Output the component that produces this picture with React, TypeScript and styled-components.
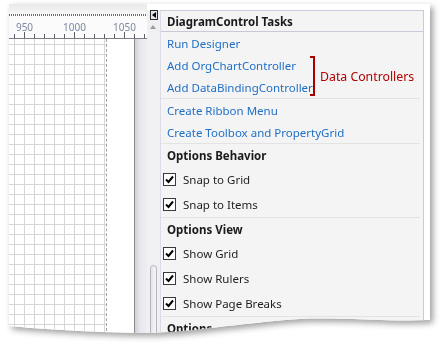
import React from 'react';
import styled, { createGlobalStyle } from 'styled-components';

const GlobalStyle = createGlobalStyle`
  html, body {
    margin: 0;
    padding: 0;
    background: #ffffff;
    width: 443px;
    height: 348px;
    overflow: hidden;
  }
  body {
    font-family: "Noto Sans", "Open Sans", Arial, sans-serif;
    font-size: 11.5px;
  }
`;

const Stage = styled.div`
  padding: 4px 13px 0 9px;
`;

const ShadowWrap = styled.div`
  filter: drop-shadow(3px 3px 3px rgba(0, 0, 0, 0.38));
`;

const Page = styled.div`
  display: flex;
  width: 421px;
  height: 332px;
  background: #ffffff;
  clip-path: path('M0,0 H421 V316 C380,318 330,313 291,315 C230,319 180,329 131,329 C80,328 30,325 0,322 Z');
`;

const Canvas = styled.div`
  display: flex;
  flex-direction: column;
  width: 138px;
`;

const TopStrip = styled.div`
  height: 10px;
  background: linear-gradient(#e9e9e9, #f7f7f7);
`;

const Dotted = styled.div`
  height: 2px;
  background: repeating-linear-gradient(90deg, #6c6c6c 0 1px, transparent 1px 2px);
`;

const RulerBox = styled.div`
  height: 22px;
  background: #fbfbfb;
  border-bottom: 1px solid #7c7c84;
`;

const CanvasBody = styled.div`
  flex: 1;
  display: flex;
`;

const Grid = styled.div`
  width: 97px;
  border-right: 1px dashed #a4a4a4;
  background-color: #ffffff;
  background-image: linear-gradient(to right, #d6d6d6 1px, transparent 1px),
    linear-gradient(to bottom, #d6d6d6 1px, transparent 1px);
  background-size: 10px 10px;
  background-position: 5px 5px;
`;

const Blank = styled.div`
  width: 27px;
  background: #ffffff;
  border-right: 1px solid #8a8a8e;
`;

const Gutter = styled.div`
  flex: 1;
  background: linear-gradient(90deg, #cfcfd6, #e6e6ec 40%, #efeff2);
`;

const ScrollCol = styled.div`
  position: relative;
  width: 13px;
  background: linear-gradient(#ffffff 0 6px, #f0f0f2 6px);
`;

const Collapse = styled.div`
  position: absolute;
  left: 3px;
  top: 6px;
  width: 6px;
  height: 8px;
  border: 1px solid #2a2a2a;
  background: #dfe6ef;
  display: flex;
  align-items: center;
  justify-content: center;
  &::after {
    content: '';
    border-right: 4px solid #000;
    border-top: 3px solid transparent;
    border-bottom: 3px solid transparent;
  }
`;

const UpArrow = styled.div`
  position: absolute;
  left: 3px;
  top: 21px;
  border-bottom: 4px solid #9a9aa0;
  border-left: 3px solid transparent;
  border-right: 3px solid transparent;
`;

const Thumb = styled.div`
  position: absolute;
  left: 3px;
  top: 261px;
  width: 5px;
  height: 90px;
  border: 1px solid #b4b4bc;
  border-radius: 4px 4px 0 0;
  background: linear-gradient(90deg, #e6e6ea, #f6f6f8);
`;

const Panel = styled.div`
  position: relative;
  margin-top: 6px;
  width: 262px;
  background: #f4f4f4;
  border-top: 1px solid #c9c9dc;
  border-right: 1px solid #c9c9dc;
  border-left: 1px solid #dcdce6;
  display: flex;
  flex-direction: column;
  overflow: hidden;
`;

const PanelHeader = styled.div`
  flex-shrink: 0;
  height: 21px;
  box-sizing: border-box;
  padding: 1px 0 0 6px;
  display: flex;
  align-items: center;
  font-weight: bold;
  color: #1b1b1b;
  border-bottom: 1px solid #c9c9dc;
`;

const Section = styled.div<{ $last?: boolean }>`
  flex-shrink: 0;
  display: flex;
  flex-direction: column;
  padding-left: 6px;
  margin-right: 3px;
  border-bottom: 1px solid ${(p) => (p.$last ? 'transparent' : '#e3e3e3')};
`;

const LinkRow = styled.div`
  height: 22px;
  display: flex;
  align-items: center;
  color: #1f6fc6;
  white-space: nowrap;
`;

const GroupTitle = styled.div`
  height: 23px;
  display: flex;
  align-items: center;
  font-weight: bold;
  color: #1b1b1b;
`;

const CheckRow = styled.div`
  height: 25px;
  display: flex;
  align-items: center;
  gap: 7px;
  color: #1e1e1e;
  margin-left: -4px;
`;

const Box = styled.span`
  width: 11px;
  height: 11px;
  border: 1px solid #3a3a3a;
  background: #ffffff;
  display: flex;
  align-items: center;
  justify-content: center;
`;

const Callout = styled.div`
  position: absolute;
  left: 149px;
  top: 45px;
  display: flex;
  align-items: center;
  gap: 5px;
  color: #b00000;
  font-size: 12.3px;
  white-space: nowrap;
`;

const Bracket = styled.div`
  width: 3px;
  height: 36px;
  border: 2px solid #a80000;
  border-left: none;
`;

const Check = () => (
  <svg width="9" height="9" viewBox="0 0 9 9">
    <path d="M1 4.5 L3.5 7 L8 1.5" fill="none" stroke="#000" strokeWidth="2" />
  </svg>
);

const Ruler = () => {
  const ticks = [];
  for (let i = 0; i < 14; i++) {
    const x = 5.5 + i * 10;
    const major = i % 5 === 1;
    ticks.push(<line key={i} x1={x} x2={x} y1={major ? 16 : 18} y2={22} stroke="#5c5c68" strokeWidth="1" />);
  }
  const labels = [
    { x: 15.5, t: '950' },
    { x: 65.5, t: '1000' },
    { x: 115.5, t: '1050' },
  ];
  return (
    <svg width="138" height="22" style={{ display: 'block' }}>
      {ticks}
      {labels.map((l) => (
        <text key={l.t} x={l.x} y={15} textAnchor="middle" fontSize="10" fill="#7c88a0" fontFamily="Noto Sans, sans-serif">
          {l.t}
        </text>
      ))}
    </svg>
  );
};

const CheckItem = ({ label }: { label: string }) => (
  <CheckRow>
    <Box>
      <Check />
    </Box>
    {label}
  </CheckRow>
);

const App = () => {
  return (
    <>
      <GlobalStyle />
      <Stage>
        <ShadowWrap>
          <Page>
            <Canvas>
              <TopStrip />
              <Dotted />
              <RulerBox>
                <Ruler />
              </RulerBox>
              <CanvasBody>
                <Grid />
                <Blank />
                <Gutter />
              </CanvasBody>
            </Canvas>
            <ScrollCol>
              <Collapse />
              <UpArrow />
              <Thumb />
            </ScrollCol>
            <Panel>
              <PanelHeader>DiagramControl Tasks</PanelHeader>
              <Section>
                <LinkRow>Run Designer</LinkRow>
                <LinkRow>Add OrgChartController</LinkRow>
                <LinkRow>Add DataBindingController</LinkRow>
              </Section>
              <Section>
                <LinkRow>Create Ribbon Menu</LinkRow>
                <LinkRow>Create Toolbox and PropertyGrid</LinkRow>
              </Section>
              <Section>
                <GroupTitle>Options Behavior</GroupTitle>
                <CheckItem label="Snap to Grid" />
                <CheckItem label="Snap to Items" />
              </Section>
              <Section>
                <GroupTitle>Options View</GroupTitle>
                <CheckItem label="Show Grid" />
                <CheckItem label="Show Rulers" />
                <CheckItem label="Show Page Breaks" />
              </Section>
              <Section $last>
                <GroupTitle>Options</GroupTitle>
              </Section>
              <Callout>
                <Bracket />
                Data Controllers
              </Callout>
            </Panel>
          </Page>
        </ShadowWrap>
      </Stage>
    </>
  );
};

export default App;
